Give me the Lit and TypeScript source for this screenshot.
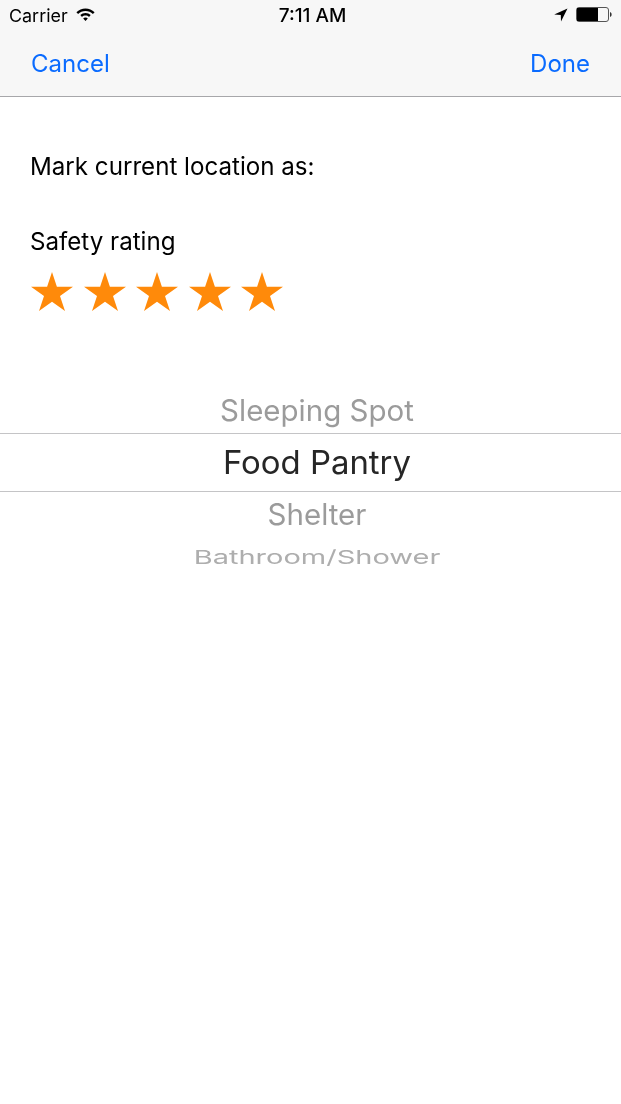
import { LitElement, html, css } from 'lit';
import { customElement, property } from 'lit/decorators.js';

@customElement('star-rating')
export class StarRating extends LitElement {
  @property({ type: Number }) count: number = 5;

  static styles = css`
    :host {
      display: flex;
      gap: 10.5px;
    }

    svg {
      display: block;
      width: 42px;
      height: 39px;
    }
  `;

  render() {
    return Array.from({ length: this.count }, () => html`
      <svg viewBox="0 0 42 40" preserveAspectRatio="none">
        <path fill="#ff8a0a" d="M21 0 L25.9 15 L42 15 L29 24.6 L34 40 L21 30.4 L8 40 L13 24.6 L0 15 L16.1 15 Z"></path>
      </svg>
    `);
  }
}

@customElement('app-root')
export class AppRoot extends LitElement {
  static styles = css`
    :host {
      display: block;
      width: 621px;
      height: 1104px;
      background: #ffffff;
      font-family: Inter, "Liberation Sans", sans-serif;
      overflow: hidden;
    }

    /* own layers, so text gets greyscale antialiasing like the reference */
    .status,
    .nav,
    .content,
    .picker {
      will-change: transform;
    }

    .header {
      height: 96px;
      background: #f7f7f7;
      border-bottom: 1px solid #a7a7aa;
      display: flex;
      flex-direction: column;
    }

    .status {
      height: 30px;
      padding: 0 9px 0 9px;
      display: grid;
      grid-template-columns: 1fr auto 1fr;
      align-items: center;
      font-size: 17.9px;
      color: #000;
    }

    .status-left {
      display: flex;
      align-items: center;
      gap: 8px;
    }

    .status-right {
      display: flex;
      align-items: center;
      justify-content: flex-end;
      gap: 8px;
    }

    .time {
      padding-left: 4px;
      font-weight: 500;
      font-size: 19px;
    }

    .nav {
      flex: 1;
      padding: 0 31px 0 31px;
      display: flex;
      justify-content: space-between;
      align-items: center;
      font-size: 24px;
      color: #0a6bff;
    }

    .content {
      padding: 54px 31px 0 30px;
      color: #000;
      font-size: 24.15px;
    }

    .mark {
      line-height: 32px;
    }

    .rating-label {
      margin-top: 43px;
      line-height: 32px;
    }

    star-rating {
      margin-top: 14px;
      margin-left: 1px;
    }

    .picker {
      margin-top: 79px;
      padding-left: 13px;
      display: flex;
      flex-direction: column;
      align-items: center;
    }

    .row {
      text-align: center;
      white-space: nowrap;
      color: #9b9b9b;
    }

    .above {
      height: 43px;
      line-height: 40px;
      font-size: 29.5px;
    }

    .selected {
      align-self: stretch;
      margin-left: -13px;
      padding-left: 13px;
      height: 57px;
      line-height: 57px;
      font-size: 32.9px;
      color: #262626;
      border-top: 1px solid #c4c4c6;
      border-bottom: 1px solid #c4c4c6;
    }

    .below {
      height: 45px;
      line-height: 45px;
      font-size: 29.5px;
    }

    .far {
      height: 41px;
      line-height: 41px;
      font-size: 29px;
      color: #aeaeae;
      transform: scaleY(0.66);
    }
  `;

  render() {
    return html`
      <div class="header">
        <div class="status">
          <div class="status-left">
            <span>Carrier</span>
            <svg width="19" height="14" viewBox="0 0 19 14">
              <path fill="#000" d="M9.5 0.5 C13 0.5 16.2 1.9 18.6 4.2 L16.9 6 C15 4.1 12.4 3 9.5 3 C6.6 3 4 4.1 2.1 6 L0.4 4.2 C2.8 1.9 6 0.5 9.5 0.5 Z M9.5 5 C11.5 5 13.3 5.8 14.7 7.1 L13 8.9 C12.1 8 10.9 7.5 9.5 7.5 C8.1 7.5 6.9 8 6 8.9 L4.3 7.1 C5.7 5.8 7.5 5 9.5 5 Z M9.5 9.5 C10.4 9.5 11.2 9.8 11.8 10.4 L9.5 13 L7.2 10.4 C7.8 9.8 8.6 9.5 9.5 9.5 Z"></path>
            </svg>
          </div>
          <span class="time">7:11 AM</span>
          <div class="status-right">
            <svg width="14" height="14" viewBox="0 0 14 14">
              <path fill="#000" d="M13.5 0.5 L7 13.5 L6.8 6.9 L0.2 6.4 Z"></path>
            </svg>
            <svg width="36" height="16" viewBox="0 0 36 16">
              <rect x="0.5" y="0.5" width="32" height="14" rx="2.5" fill="none" stroke="#555"></rect>
              <rect x="1" y="1" width="21" height="13" fill="#000"></rect>
              <path fill="#333" d="M34 5 C35.2 5.4 35.6 6.2 35.6 7.5 C35.6 8.8 35.2 9.6 34 10 Z"></path>
            </svg>
          </div>
        </div>
        <div class="nav">
          <span>Cancel</span>
          <span>Done</span>
        </div>
      </div>
      <div class="content">
        <div class="mark">Mark current location as:</div>
        <div class="rating-label">Safety rating</div>
        <star-rating></star-rating>
      </div>
      <div class="picker">
        <div class="row above">Sleeping Spot</div>
        <div class="row selected">Food Pantry</div>
        <div class="row below">Shelter</div>
        <div class="row far">Bathroom/Shower</div>
      </div>
    `;
  }
}
